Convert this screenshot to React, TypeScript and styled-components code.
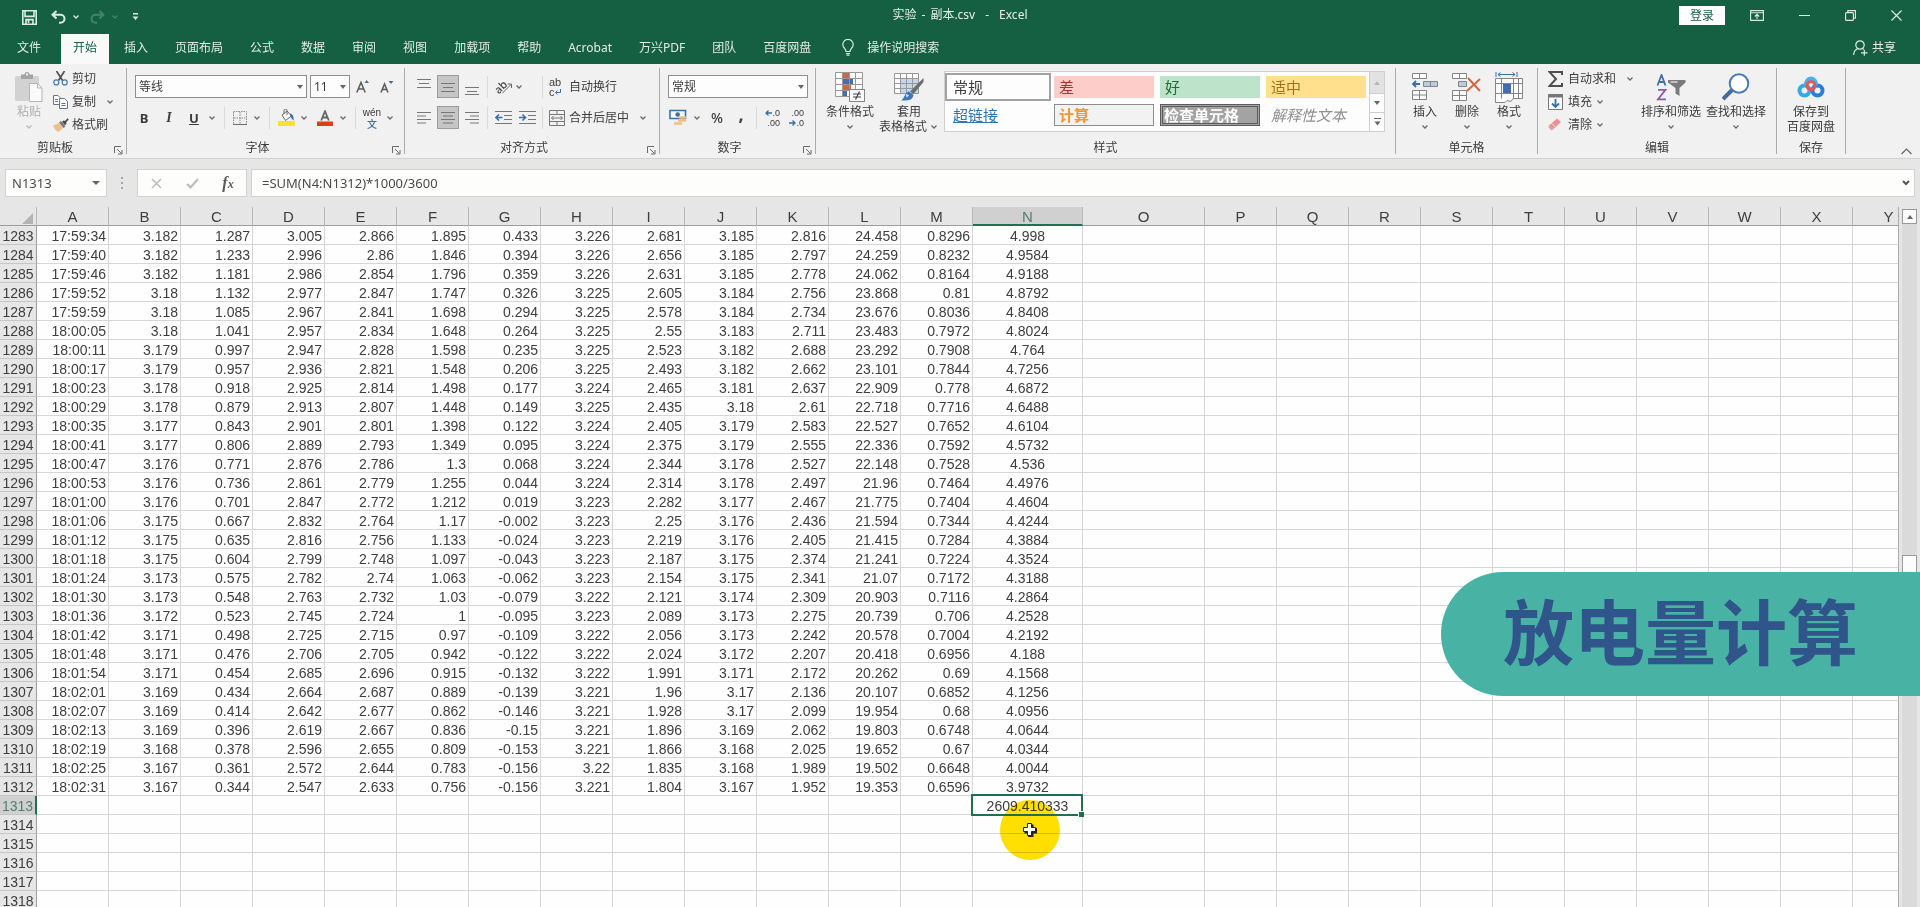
import React from "react";
import styled, { createGlobalStyle, css } from "styled-components";

/* ---------- data ---------- */

const COLUMNS: { name: string; width: number }[] = [
  ..."ABCDEFGHIJKLM".split("").map((name) => ({ name, width: 72 })),
  { name: "N", width: 110 },
  { name: "O", width: 122 },
  ..."PQRSTUVWXY".split("").map((name) => ({ name, width: 72 })),
];

const FIRST_ROW = 1283;
const SELECTED_ROW = 1313;
const LAST_ROW = 1318;

const ROWS = `
17:59:34 3.182 1.287 3.005 2.866 1.895 0.433 3.226 2.681 3.185 2.816 24.458 0.8296 4.998
17:59:40 3.182 1.233 2.996 2.86 1.846 0.394 3.226 2.656 3.185 2.797 24.259 0.8232 4.9584
17:59:46 3.182 1.181 2.986 2.854 1.796 0.359 3.226 2.631 3.185 2.778 24.062 0.8164 4.9188
17:59:52 3.18 1.132 2.977 2.847 1.747 0.326 3.225 2.605 3.184 2.756 23.868 0.81 4.8792
17:59:59 3.18 1.085 2.967 2.841 1.698 0.294 3.225 2.578 3.184 2.734 23.676 0.8036 4.8408
18:00:05 3.18 1.041 2.957 2.834 1.648 0.264 3.225 2.55 3.183 2.711 23.483 0.7972 4.8024
18:00:11 3.179 0.997 2.947 2.828 1.598 0.235 3.225 2.523 3.182 2.688 23.292 0.7908 4.764
18:00:17 3.179 0.957 2.936 2.821 1.548 0.206 3.225 2.493 3.182 2.662 23.101 0.7844 4.7256
18:00:23 3.178 0.918 2.925 2.814 1.498 0.177 3.224 2.465 3.181 2.637 22.909 0.778 4.6872
18:00:29 3.178 0.879 2.913 2.807 1.448 0.149 3.225 2.435 3.18 2.61 22.718 0.7716 4.6488
18:00:35 3.177 0.843 2.901 2.801 1.398 0.122 3.224 2.405 3.179 2.583 22.527 0.7652 4.6104
18:00:41 3.177 0.806 2.889 2.793 1.349 0.095 3.224 2.375 3.179 2.555 22.336 0.7592 4.5732
18:00:47 3.176 0.771 2.876 2.786 1.3 0.068 3.224 2.344 3.178 2.527 22.148 0.7528 4.536
18:00:53 3.176 0.736 2.861 2.779 1.255 0.044 3.224 2.314 3.178 2.497 21.96 0.7464 4.4976
18:01:00 3.176 0.701 2.847 2.772 1.212 0.019 3.223 2.282 3.177 2.467 21.775 0.7404 4.4604
18:01:06 3.175 0.667 2.832 2.764 1.17 -0.002 3.223 2.25 3.176 2.436 21.594 0.7344 4.4244
18:01:12 3.175 0.635 2.816 2.756 1.133 -0.024 3.223 2.219 3.176 2.405 21.415 0.7284 4.3884
18:01:18 3.175 0.604 2.799 2.748 1.097 -0.043 3.223 2.187 3.175 2.374 21.241 0.7224 4.3524
18:01:24 3.173 0.575 2.782 2.74 1.063 -0.062 3.223 2.154 3.175 2.341 21.07 0.7172 4.3188
18:01:30 3.173 0.548 2.763 2.732 1.03 -0.079 3.222 2.121 3.174 2.309 20.903 0.7116 4.2864
18:01:36 3.172 0.523 2.745 2.724 1 -0.095 3.223 2.089 3.173 2.275 20.739 0.706 4.2528
18:01:42 3.171 0.498 2.725 2.715 0.97 -0.109 3.222 2.056 3.173 2.242 20.578 0.7004 4.2192
18:01:48 3.171 0.476 2.706 2.705 0.942 -0.122 3.222 2.024 3.172 2.207 20.418 0.6956 4.188
18:01:54 3.171 0.454 2.685 2.696 0.915 -0.132 3.222 1.991 3.171 2.172 20.262 0.69 4.1568
18:02:01 3.169 0.434 2.664 2.687 0.889 -0.139 3.221 1.96 3.17 2.136 20.107 0.6852 4.1256
18:02:07 3.169 0.414 2.642 2.677 0.862 -0.146 3.221 1.928 3.17 2.099 19.954 0.68 4.0956
18:02:13 3.169 0.396 2.619 2.667 0.836 -0.15 3.221 1.896 3.169 2.062 19.803 0.6748 4.0644
18:02:19 3.168 0.378 2.596 2.655 0.809 -0.153 3.221 1.866 3.168 2.025 19.652 0.67 4.0344
18:02:25 3.167 0.361 2.572 2.644 0.783 -0.156 3.22 1.835 3.168 1.989 19.502 0.6648 4.0044
18:02:31 3.167 0.344 2.547 2.633 0.756 -0.156 3.221 1.804 3.167 1.952 19.353 0.6596 3.9732
`
  .trim()
  .split("\n")
  .map((line) => line.split(" "));

/* ---------- theme values ---------- */

const GREEN = "#155f43";
const ACCENT = "#1f6f50";
const UI_FONT = '"Noto Sans", "Noto Sans CJK SC", sans-serif';
const STYLE_FONT = '"Noto Sans CJK SC", "Noto Sans", sans-serif';
const CELL_FONT = '"Liberation Sans", "Noto Sans CJK SC", sans-serif';

const GlobalStyle = createGlobalStyle`
  *, *::before, *::after { box-sizing: border-box; }
  body { margin: 0; background: #e6e6e6; overflow: hidden; }
  button, input, select { font: inherit; color: inherit; margin: 0; }
  button { background: none; border: 0; padding: 0; cursor: default; }
  svg { display: block; flex: none; }
`;

/* ---------- frame ---------- */

const Window = styled.div`
  height: 100vh;
  display: flex;
  flex-direction: column;
  overflow: hidden;
  background: #e6e6e6;
  color: #3c3c3c;
  font: 12px/16px ${UI_FONT};
`;

const TitleBar = styled.header`
  display: grid;
  grid-template-columns: 1fr auto 1fr;
  align-items: center;
  height: 34px;
  padding-bottom: 4px;
  background: ${GREEN};
  color: #e6efea;
`;

const QuickAccess = styled.div`
  display: flex;
  align-items: center;
  padding: 4px 0 0 22px;
  gap: 9px;

  & > button:first-child {
    margin-right: 5px;
  }
  & > button:last-child {
    margin-left: 3px;
  }
`;

const SplitPair = styled.span<{ $dim?: boolean }>`
  display: flex;
  align-items: center;
  gap: 5px;
  opacity: ${(p) => (p.$dim ? 0.25 : 1)};
`;

const DocTitle = styled.h1`
  display: flex;
  gap: 5px;
  margin: 0;
  font-size: 12px;
  font-weight: 400;
`;

const AppDash = styled.span`
  margin: 0 5px;
`;

const WindowControls = styled.div`
  display: flex;
  align-items: center;
  justify-content: flex-end;
  padding-right: 18px;
  gap: 35px;
`;

const SignIn = styled.button`
  width: 46px;
  height: 19px;
  margin-right: -10px;
  background: #fdfefe;
  color: ${GREEN};
  line-height: 19px;
`;

const TabBar = styled.nav`
  display: flex;
  align-items: stretch;
  height: 30px;
  padding: 0 24px 0 5px;
  gap: 3px;
  background: ${GREEN};
  color: #e2ece7;
`;

const Tab = styled.button<{ $active?: boolean; $file?: boolean }>`
  padding: 0 12px 3px;
  margin-right: ${(p) => (p.$file ? 5 : 0)}px;
  background: ${(p) => (p.$active ? "#f8f9f8" : "transparent")};
  color: ${(p) => (p.$active ? GREEN : "inherit")};
  white-space: nowrap;
`;

const TellMe = styled.button`
  display: flex;
  align-items: center;
  gap: 13px;
  padding: 0 0 3px 16px;
`;

const Share = styled.button`
  display: flex;
  align-items: center;
  gap: 4px;
  margin-left: auto;
  padding-bottom: 3px;
`;

/* ---------- ribbon ---------- */

const Ribbon = styled.section`
  display: flex;
  height: 95px;
  background: #f1f1f1;
  border-bottom: 1px solid #d2d2d2;
`;

const Group = styled.div<{ $w: number }>`
  flex: none;
  display: flex;
  flex-direction: column;
  width: ${(p) => p.$w}px;
  height: 94px;
`;

const Divider = styled.span`
  flex: none;
  width: 1px;
  height: 86px;
  margin-top: 4px;
  background: #ababab;
`;

const GroupBody = styled.div<{ $left?: number; $gap?: number }>`
  flex: 1;
  display: flex;
  gap: ${(p) => p.$gap ?? 0}px;
  padding-left: ${(p) => p.$left ?? 0}px;
`;

const GroupFooter = styled.div`
  display: flex;
  align-items: center;
  height: 20px;
`;

const GroupLabel = styled.span`
  flex: 1;
  text-align: center;
`;

const Launcher = styled.button`
  display: flex;
  justify-content: flex-end;
  width: 16px;
  padding: 4px 3px 0 0;
`;

const Lines = styled.div`
  display: flex;
  flex-direction: column;
  gap: 8px;
  padding-top: 11px;
`;

const Line = styled.div<{ $gap: number }>`
  display: flex;
  align-items: center;
  height: 23px;
  gap: ${(p) => p.$gap}px;
`;

const Stack = styled.div<{ $w: number }>`
  display: flex;
  flex-direction: column;
  width: ${(p) => p.$w}px;
  padding-top: 3px;
`;

const SmallButton = styled.button<{ $iconW: number; $arrowGap?: number }>`
  display: grid;
  grid-template-columns: ${(p) => p.$iconW}px auto auto;
  justify-content: start;
  align-items: center;
  height: 23px;
  column-gap: 3px;
  white-space: nowrap;

  & > svg:last-child {
    margin-left: ${(p) => p.$arrowGap ?? 0}px;
  }
`;

const BigButton = styled.button<{ $w: number; $dim?: boolean }>`
  display: flex;
  flex-direction: column;
  align-items: center;
  flex: none;
  width: ${(p) => p.$w}px;
  padding-top: 6px;
  line-height: 15px;
  white-space: nowrap;
  color: ${(p) => (p.$dim ? "#b0b0b0" : "inherit")};
`;

const BigIcon = styled.span`
  display: flex;
  align-items: center;
  justify-content: center;
  height: 34px;
`;

const BigLine = styled.span`
  display: flex;
  align-items: center;
  justify-content: center;
  gap: 2px;
  height: 15px;
`;

const Tool = styled.button<{ $w?: number; $pressed?: boolean }>`
  flex: none;
  display: flex;
  align-items: center;
  justify-content: center;
  width: ${(p) => p.$w ?? 18}px;
  height: 23px;
  ${(p) =>
    p.$pressed &&
    css`
      background: #c5c5c5;
      border: 1px solid #9b9b9b;
    `}
`;

const Letter = styled.span<{ $kind: "bold" | "italic" | "underline" }>`
  font-family: ${(p) => (p.$kind === "italic" ? '"Liberation Serif", serif' : UI_FONT)};
  font-size: ${(p) => (p.$kind === "italic" ? 14 : 13)}px;
  font-weight: 700;
  font-style: ${(p) => (p.$kind === "italic" ? "italic" : "normal")};
  text-decoration: ${(p) => (p.$kind === "underline" ? "underline" : "none")};
`;

const Percent = styled.span`
  font-size: 14px;
  font-weight: 500;
`;

const Comma = styled.span`
  padding-bottom: 8px;
  font-size: 18px;
  font-weight: 700;
`;

const Pair = styled.span<{ $gap: number; $w?: number }>`
  flex: none;
  display: flex;
  align-items: center;
  gap: ${(p) => p.$gap}px;
  width: ${(p) => (p.$w ? `${p.$w}px` : "auto")};
`;

const ThinRule = styled.span`
  flex: none;
  width: 1px;
  height: 22px;
  background: #d9d9d9;
`;

const SelectFrame = styled.label<{ $w: number }>`
  position: relative;
  flex: none;
  width: ${(p) => p.$w}px;
  height: 23px;

  select {
    appearance: none;
    width: 100%;
    height: 100%;
    padding: 0 3px;
    border: 1px solid #8f8f8f;
    border-radius: 0;
    background: #fdfdfd;
  }

  svg {
    position: absolute;
    right: 4px;
    top: 10px;
    pointer-events: none;
  }
`;

const Gallery = styled.div`
  display: flex;
  flex: none;
  height: 61px;
  margin-top: 7px;
  border: 1px solid #d0d0d0;
  background: #fdfdfd;
`;

const GalleryGrid = styled.div`
  display: grid;
  grid-template-columns: repeat(4, 100px);
  grid-template-rows: repeat(2, 22px);
  gap: 6px;
  padding: 4px 3px;
`;

type Look = "plain" | "link" | "bad" | "good" | "neutral" | "calc" | "check" | "note";

const looks = {
  plain: css`
    outline: 2px solid #a2a2a2;
    outline-offset: 1px;
  `,
  link: css`
    color: #2f76b5;
    text-decoration: underline;
  `,
  bad: css`
    background: #fdcdca;
    color: #b0302c;
  `,
  good: css`
    background: #bee3cb;
    color: #1f6b35;
  `,
  neutral: css`
    background: #ffe08c;
    color: #a3711a;
  `,
  calc: css`
    background: #f2f2f2;
    border-color: #8c8c8c;
    color: #f0952f;
    font-weight: 700;
  `,
  check: css`
    background: #a3a3a3;
    border: 3px double #5c5c5c;
    color: #fbfbfb;
    font-weight: 700;
  `,
  note: css`
    color: #8f8f8f;
    font-style: italic;
  `,
};

const StyleCell = styled.button<{ $look: Look }>`
  padding: 0 0 1px ${(p) => (p.$look === "check" ? 1 : 4)}px;
  border: 1px solid transparent;
  text-align: left;
  font: 15px/15px ${STYLE_FONT};
  white-space: nowrap;
  ${(p) => looks[p.$look]}
`;

const GalleryScroll = styled.div`
  display: grid;
  grid-template-rows: 21px 19px 19px;
  width: 15px;

  button {
    display: grid;
    place-items: center;
    border-left: 1px solid #cfcfcf;
  }
  button + button {
    border-top: 1px solid #cfcfcf;
  }
  button:first-child {
    background: #e2e2e2;
  }
`;

const Collapse = styled.button`
  margin-left: auto;
  align-self: flex-end;
  padding: 0 8px 3px 0;
`;

/* ---------- formula bar ---------- */

const FormulaBar = styled.section`
  display: flex;
  align-items: flex-start;
  height: 48px;
  padding: 10px 5px 0;
  color: #4a4a4a;
`;

const Box = styled.div`
  display: flex;
  align-items: center;
  height: 28px;
  border: 1px solid #d2d2d2;
  background: #fdfdfc;

  input {
    flex: 1;
    min-width: 0;
    border: 0;
    padding: 0;
    background: none;
    outline: none;
    font-size: 13px;
  }
`;

const NameBox = styled(Box)`
  width: 102px;
  padding: 0 6px;
`;

const Grip = styled.span`
  display: flex;
  justify-content: center;
  align-items: center;
  width: 30px;
  height: 28px;
`;

const FormulaActions = styled(Box)`
  width: 110px;
  padding: 0 9px;
  justify-content: space-between;
  margin-right: 4px;

  button {
    width: 18px;
    display: grid;
    place-items: center;
  }
`;

const FormulaBox = styled(Box)`
  flex: 1;
  padding: 0 3px 0 10px;
`;

const Fx = styled.span`
  font: italic 700 16px/18px "Liberation Serif", serif;
  color: #5a5a5a;

  small {
    font-size: 12px;
  }
`;

/* ---------- sheet ---------- */

const Sheet = styled.main`
  position: relative;
  flex: 1;
  min-height: 0;
  display: flex;
  overflow: hidden;
`;

const Viewport = styled.div`
  flex: 1;
  min-width: 0;
  overflow: hidden;
  border-right: 1px solid #ababab;
`;

const Grid = styled.table`
  table-layout: fixed;
  width: 1925px;
  border-spacing: 0;
  font: 14px/16px ${CELL_FONT};
  color: #3e3e40;
`;

const headBase = css`
  padding: 2px 0 0;
  font-weight: 400;
  height: 19px;
  background: #e6e6e6;
  text-align: center;
`;

const ColHead = styled.th<{ $on?: boolean }>`
  ${headBase}
  font-size: 15px;
  border-right: 1px solid #b9b9b9;
  border-bottom: 1px solid #9d9d9d;
  ${(p) =>
    p.$on &&
    css`
      background: #d0d0d0;
      color: #4d8071;
      border-bottom: 2px solid ${ACCENT};
      line-height: 15px;
    `}
`;

const Corner = styled.th`
  ${headBase}
  border-right: 1px solid #b9b9b9;
  border-bottom: 1px solid #9d9d9d;

  svg {
    margin: 2px 3px 0 auto;
  }
`;

const RowHead = styled.th<{ $on?: boolean }>`
  ${headBase}
  border-right: 1px solid #9d9d9d;
  border-bottom: 1px solid #c6c6c6;
  ${(p) =>
    p.$on &&
    css`
      background: #d0d0d0;
      color: #4d8071;
      border-right: 2px solid ${ACCENT};
    `}
`;

const Cell = styled.td<{ $center?: boolean }>`
  position: relative;
  height: 19px;
  padding: 2px ${(p) => (p.$center ? 0 : 2)}px 0 0;
  border-right: 1px solid #d6d6d6;
  border-bottom: 1px solid #d6d6d6;
  background: #fefefe;
  text-align: ${(p) => (p.$center ? "center" : "right")};
  white-space: nowrap;
`;

const SelectionFrame = styled.span`
  position: absolute;
  z-index: 1;
  inset: -2px -1px -2px -2px;
  border: 2px solid ${ACCENT};

  &::after {
    content: "";
    position: absolute;
    right: -3px;
    bottom: -3px;
    width: 6px;
    height: 6px;
    background: ${ACCENT};
    border: 1px solid #fefefe;
    border-right: 0;
    border-bottom: 0;
  }
`;

const Pointer = styled.div`
  position: absolute;
  left: 1000px;
  top: 593px;
  width: 60px;
  height: 60px;
  display: grid;
  place-items: center;
  border-radius: 50%;
  background: #ffe000;
  mix-blend-mode: multiply;
`;

const PointerCross = styled(Pointer)`
  background: none;
  mix-blend-mode: normal;
`;

const ScrollBar = styled.div`
  width: 21px;
  padding: 2px 3px 0;
  display: flex;
  flex-direction: column;
`;

const ScrollButton = styled.button`
  display: grid;
  place-items: center;
  height: 15px;
  border: 1px solid #9a9a9a;
  background: #fbfbfb;
`;

const ScrollTrack = styled.div`
  flex: 1;
  padding-top: 331px;
  background: #dadada;
`;

const ScrollThumb = styled.div`
  height: 60px;
  border: 1px solid #9a9a9a;
  background: #fdfdfd;
`;

const Banner = styled.aside`
  position: absolute;
  right: 0;
  top: 365px;
  padding: 0 62px 12px;
  border-radius: 62px 0 0 62px;
  background: #48b2a5;
  color: #2f558b;
  font: 700 71px/112px "Noto Sans CJK SC", sans-serif;
  white-space: nowrap;
`;

/* ---------- glyphs ---------- */

const Chevron = ({ color = "#6a6a6a" }: { color?: string }) => (
  <svg width="10" height="6" viewBox="0 0 10 6" fill="none" stroke={color} strokeWidth="1.3">
    <path d="M2.5 1.5 5 4l2.5-2.5" />
  </svg>
);

const Caret = ({ w = 6, color = "#666", up = false }: { w?: number; color?: string; up?: boolean }) => (
  <svg width={w} height="4" viewBox="0 0 6 4" preserveAspectRatio="none" fill={color}>
    <path d={up ? "M0 4h6L3 0z" : "M0 0h6L3 4z"} />
  </svg>
);

const LauncherIcon = () => (
  <svg width="9" height="9" viewBox="0 0 9 9" fill="none" stroke="#6a6a6a">
    <path d="M.5 7V.5H7M3 3l4.5 4.5M8 4v4H4" />
  </svg>
);

const SaveIcon = () => (
  <svg width="15" height="15" viewBox="0 0 15 15" fill="none" stroke="#dcebe4" strokeWidth="1.6">
    <path d="M.8.8h13.4v13.4H.8zM3 1v5.4h9V1M4 14V9.6h7V14M6.5 10v3" />
  </svg>
);

const UndoIcon = () => (
  <svg width="15" height="14" viewBox="0 0 15 14" fill="none" stroke="#dcebe4" strokeWidth="2">
    <path d="M5.5 1 1.5 4.8l4 3.7M2 4.8h7.5a4 4 0 0 1 0 8H8" />
  </svg>
);

const RedoIcon = () => (
  <svg width="15" height="14" viewBox="0 0 15 14" fill="none" stroke="#dcebe4" strokeWidth="2">
    <path d="M9.5 1l4 3.8-4 3.7M13 4.8H5.5a4 4 0 0 0 0 8H7" />
  </svg>
);

const CustomizeIcon = () => (
  <svg width="7" height="8" viewBox="0 0 7 8" fill="#dcebe4">
    <path d="M1 0h5v1.4H1zM.5 3.5h6L3.5 7z" />
  </svg>
);

const RibbonModeIcon = () => (
  <svg width="14" height="11" viewBox="0 0 14 11" fill="none" stroke="#dcebe4" strokeWidth="1.1">
    <path d="M.6.6h12.8v9.8H.6zM.6 2.8h12.8M7 9V4.5M4.8 6.5 7 4.3l2.2 2.2" />
  </svg>
);

const MinimizeIcon = () => (
  <svg width="11" height="11" viewBox="0 0 11 11" stroke="#dcebe4">
    <path d="M0 5.5h11" />
  </svg>
);

const RestoreIcon = () => (
  <svg width="11" height="11" viewBox="0 0 11 11" fill="none" stroke="#dcebe4" strokeWidth="1.1">
    <rect x=".6" y="2.6" width="7.8" height="7.8" rx="1" />
    <path d="M2.8 2.5V.6h7.6v7.6H8.5" />
  </svg>
);

const CloseIcon = () => (
  <svg width="11" height="11" viewBox="0 0 11 11" stroke="#dcebe4" strokeWidth="1.2">
    <path d="m.5.5 10 10M10.5.5l-10 10" />
  </svg>
);

const BulbIcon = () => (
  <svg width="12" height="17" viewBox="0 0 12 17" fill="none" stroke="#dcebe4" strokeWidth="1.2">
    <path d="M4 12.5c0-2.6-3.2-3.6-3.2-6.900a5.200 5.200 0 0 1 10.400 0c0 3.300-3.200 4.300-3.200 6.900zM4 14.500h4M4.500 16.200h3" />
  </svg>
);

const ShareIcon = () => (
  <svg width="15" height="16" viewBox="0 0 15 16" fill="none" stroke="#dcebe4" strokeWidth="1.2">
    <circle cx="7" cy="5" r="4.2" />
    <path d="M.6 15c.2-3.5 1.8-5.3 4-6.2M9.5 8.5l1.2.9M8 12.8h6.5M11.3 9.800v6" />
  </svg>
);

const PasteIcon = () => (
  <svg width="28" height="31" viewBox="0 0 28 31">
    <rect x="0" y="4" width="24" height="25" rx="1.5" fill="#d2d2d2" />
    <path d="M6 2.5h3.5a2.5 2.5 0 0 1 5 0H18V7H6z" fill="#a4a4a4" />
    <rect x="11" y="1.5" width="2" height="2" fill="#f1f1f1" />
    <path d="M14.5 11.5h8l4.5 4.5v13.5H14.5z" fill="#fafafa" stroke="#b5b5b5" />
    <path d="M22.5 11.5V16H27" fill="none" stroke="#b5b5b5" />
  </svg>
);

const CutIcon = () => (
  <svg width="15" height="15" viewBox="0 0 15 15" fill="none">
    <path d="M3.5 0 9.5 9.5M11.5 0 5.5 9.5" stroke="#505050" strokeWidth="1.7" />
    <circle cx="3.3" cy="11.4" r="2.5" stroke="#4479b4" strokeWidth="1.2" />
    <circle cx="11.7" cy="11.4" r="2.5" stroke="#4479b4" strokeWidth="1.2" />
  </svg>
);

const CopyIcon = () => (
  <svg width="15" height="14" viewBox="0 0 15 14" fill="#fafafa" stroke="#6d7480">
    <path d="M.5.5H5l2 2v7H.5zM2 4.5h3M2 6.5h3" />
    <path d="M6.5 3.5h5l3 3v7h-8z" />
    <path d="M8.5 8.5h4M8.5 10.5h4" stroke="#4479b4" />
  </svg>
);

const BrushIcon = () => (
  <svg width="16" height="14" viewBox="0 0 16 14">
    <path d="M0 7.5 6 5l4 5-4.5 4c-2-.5-4-3-5.5-6.5z" fill="#ecc08a" />
    <path d="m6 4.5 2-1.5 4.5 5.5L10.5 10z" fill="#777" />
    <path d="m9 3.8 1.5-1.3L12 3l2.5-2.8 1.3 1.3-2.6 2.8.3 1.5-1.5 1.5z" fill="#4a4a4a" />
  </svg>
);

const GrowIcon = ({ small = false }: { small?: boolean }) => (
  <svg width="14" height="15" viewBox="0 0 14 15" fill="none" stroke="#5a5a5a">
    {small ? (
      <>
        <path d="M1 13.5 4.5 5l3.5 8.5M2.5 10.5h4" strokeWidth="1.5" />
        <path d="M8.5 2h5l-2.5 3z" fill="#4d6c8e" stroke="none" />
      </>
    ) : (
      <>
        <path d="M.8 13.5 5 3.5l4.2 10M2.5 10h5" strokeWidth="1.5" />
        <path d="M8.5 4h4.5L10.7 1z" fill="#4d6c8e" stroke="none" />
      </>
    )}
  </svg>
);

const BorderIcon = () => (
  <svg width="14" height="14" viewBox="0 0 14 14" fill="none" stroke="#8a8a8a">
    <path d="M.5.5h13v13H.5zM7 1v12M1 7h12" strokeDasharray="1.5 1" />
    <path d="M0 13.5h14" stroke="#6d6d6d" />
  </svg>
);

const BucketIcon = () => (
  <svg width="17" height="17" viewBox="0 0 17 17">
    <path d="m4 6 5-4 4.5 5-6 4.5z" fill="#f6f6f6" stroke="#6b6b6b" />
    <path d="M6 5V1.5a1.5 1.5 0 0 1 3 0V6" fill="none" stroke="#6b6b6b" />
    <path d="M12 4.500c3 .5 4 3 3.500 7-1-1-2.500-2.500-3-4z" fill="#3f6fa8" />
    <rect x="0" y="12" width="17" height="5" fill="#fbe12d" />
  </svg>
);

const FontColorIcon = () => (
  <svg width="16" height="16" viewBox="0 0 16 16">
    <path d="M4.2 10.5 8 1.2l3.8 9.3M5.5 7.5h5" fill="none" stroke="#666" strokeWidth="1.8" />
    <rect y="11.5" width="16" height="4.5" fill="#d9401c" />
  </svg>
);

const Phonetic = styled.span`
  display: flex;
  flex-direction: column;
  align-items: center;
  font: 10px/11px "Liberation Sans", sans-serif;

  b {
    font: 500 10px/11px "Noto Sans CJK SC", sans-serif;
    color: #3a6ea8;
  }
`;

const VLines = ({ at }: { at: "top" | "middle" | "bottom" }) => {
  const y = { top: 1, middle: 5, bottom: 9 }[at];
  return (
    <svg width="14" height="18" viewBox="0 0 14 18" stroke="#777">
      <path d={`M0 ${y + 0.5}h14M2 ${y + 4.5}h10M0 ${y + 8.5 - (at === "bottom" ? 1 : 0)}h14`} />
    </svg>
  );
};

const HLines = ({ at }: { at: "left" | "center" | "right" }) => {
  const x = { left: 0, center: 2, right: 5 }[at];
  const len = at === "center" ? 10 : 9;
  return (
    <svg width="14" height="12" viewBox="0 0 14 12" stroke="#777">
      <path d={`M0 .5h14M${x} 4h${len}M0 7.5h14M${x} 11h${len}`} />
    </svg>
  );
};

const Slanted = styled.span`
  display: block;
  font-size: 11px;
  font-weight: 500;
  line-height: 10px;
  transform: rotate(-45deg);
`;

const SlantArrow = () => (
  <svg width="10" height="12" viewBox="0 0 10 12" fill="none" stroke="#666">
    <path d="M0 11.5 9 2.5M5.5 2H9.500V6" />
  </svg>
);

const SlantBox = styled.span`
  display: flex;
  align-items: center;

  svg {
    margin: 3px 0 0 -6px;
  }
`;

const IndentIcon = ({ out = false }: { out?: boolean }) => (
  <svg width="17" height="14" viewBox="0 0 17 14" fill="none" stroke="#777">
    <path d="M0 .5h17M9 4.5h8M9 8.5h8M0 12.5h17" />
    <path d={out ? "M7.5 6.5H1.5M4 3.5l-3 3 3 3" : "M0 6.5h6M3.5 3.5l3 3-3 3"} stroke="#3a6ea8" strokeWidth="1.6" />
  </svg>
);

const WrapGlyph = styled.span`
  display: flex;
  flex-direction: column;
  width: 16px;
  font: 11px/10px "Liberation Sans", sans-serif;

  span {
    display: flex;
    align-items: center;
    height: 10px;
  }
`;

const ReturnIcon = () => (
  <svg width="6" height="6" viewBox="0 0 6 6" fill="none" stroke="#3a6ea8">
    <path d="M5.5 0v3.5H1M2.5 1.500l-2 2 2 2" />
  </svg>
);

const MergeIcon = () => (
  <svg width="16" height="16" viewBox="0 0 16 16" fill="none" stroke="#777">
    <path d="M.5.5h15v15H.5zM.5 4.5h15M.5 11.5h15M8 .5v4M8 11.5v4M2.5 8h11M4.5 6l-2 2 2 2M11.5 6l2 2-2 2" />
  </svg>
);

const CurrencyIcon = () => (
  <svg width="18" height="17" viewBox="0 0 18 17">
    <path d="M1 1.5h15.5v8H1z" fill="#f4f8fc" stroke="#3d6fa5" strokeWidth="1.6" />
    <circle cx="8.7" cy="5.5" r="2.3" fill="#3d6fa5" />
    <path d="M10 8.5h7M9 11.500h8M5 14.500h8" stroke="#efbf84" strokeWidth="2.4" />
  </svg>
);

const Decimals = styled.span`
  display: flex;
  flex-direction: column;
  width: 16px;
  font: 9px/10px "Liberation Sans", sans-serif;

  span {
    display: flex;
    align-items: center;
    justify-content: flex-end;
  }
`;

const TinyArrow = ({ right = false }: { right?: boolean }) => (
  <svg width="7" height="6" viewBox="0 0 7 6" fill="none" stroke="#3a6ea8" strokeWidth="1.3">
    <path d={right ? "M0 3h6M3.5.5 6 3 3.5 5.5" : "M7 3H1M3.5.5 1 3l2.5 2.5"} />
  </svg>
);

const ConditionalIcon = () => (
  <svg width="30" height="31" viewBox="0 0 30 31">
    <path d="M.5.5h27v24H.5z" fill="#fcfcfc" />
    <rect x="7" y="1" width="7" height="6" fill="#c5694b" />
    <rect x="7" y="7" width="11" height="5" fill="#476fa6" />
    <rect x="7" y="13" width="9" height="5" fill="#c5694b" />
    <rect x="7" y="19" width="5" height="5" fill="#476fa6" />
    <path
      d="M.5.5h27v24H.5zM.5 6.5h27M.5 12.5h27M.5 18.5h27M7.5.5v24M14.5.5v24M20.5.5v24"
      fill="none"
      stroke="#989898"
    />
    <rect x="14.5" y="17.5" width="15" height="12" fill="#fbfbfb" stroke="#868686" />
    <path d="M18 22h8M18 25h8M24.5 19.5l-4 8" stroke="#444" strokeWidth="1.2" />
  </svg>
);

const TableFormatIcon = () => (
  <svg width="30" height="29" viewBox="0 0 30 29">
    <path d="M.5.5h24v20H.5z" fill="#fcfcfc" />
    <path d="M7 6h17v14H7z" fill="#c7d6ea" />
    <path
      d="M.5.5h24v20H.5zM.5 5.5h24M.5 10.5h24M.5 15.5h24M6.5.5v20M12.5.5v20M18.5.5v20"
      fill="none"
      stroke="#989898"
    />
    <path d="M29.5 5v4l-10 12-3.5-2.5z" fill="#6d6d6d" />
    <path d="M15 18.5 19.5 22c-1 5-5 6-12.5 5.5 3.5-1.5 3.5-8 8-9z" fill="#3d78b8" />
    <path d="m12 21 3 1.5-2.5 2z" fill="#eef4fa" />
  </svg>
);

const InsertCellsIcon = () => (
  <svg width="28" height="28" viewBox="0 0 28 28" fill="#fbfbfb" stroke="#858585">
    <path d="M1.5.5h14v5h-14zM8.5.5v5M1.5 17.5h14v9h-14zM1.5 22h14M8.5 17.5v9" />
    <path d="M12.5 8.5h14v5h-14zM19.5 8.5v5" fill="#bccbdd" />
    <path d="M9 11H2.5M5 8l-3 3 3 3" fill="none" stroke="#3a6ea8" strokeWidth="1.8" />
  </svg>
);

const DeleteCellsIcon = () => (
  <svg width="30" height="28" viewBox="0 0 30 28" fill="#fbfbfb" stroke="#858585">
    <path d="M.5.5h14v5H.5zM7.5.5v5M.5 17.5h14v10H.5zM.5 22.5h14M7.5 17.5v10" />
    <path d="M6.5 8.5h8v5h-8z" fill="#bccbdd" />
    <path d="m16 5 12 13M28 6 15 18" stroke="#d3683f" strokeWidth="2" />
  </svg>
);

const FormatCellsIcon = () => (
  <svg width="28" height="31" viewBox="0 0 28 31" fill="#fbfbfb" stroke="#858585">
    <path d="M.5 6.5h27v20H18l-2 3-4-1-2 2H.5z" />
    <path d="M.5 11.5h27M.5 21.5h27M6.5 6.5v20M18.5 6.5v20M23.5 6.5v20" fill="none" />
    <rect x="8" y="12" width="8" height="9" fill="#3f70ad" stroke="none" />
    <path d="M1 0v5M22 0v5M3 2.5h17M5.5.5l-2.5 2 2.5 2M17.5.5l2.5 2-2.5 2" fill="none" stroke="#3a6ea8" />
  </svg>
);

const SumIcon = () => (
  <svg width="15" height="16" viewBox="0 0 15 16" fill="none" stroke="#4f4f4f" strokeWidth="2">
    <path d="M14 4V1H1.5l6.5 7-6.5 7H14v-3" />
  </svg>
);

const FillIcon = () => (
  <svg width="15" height="16" viewBox="0 0 15 16" fill="none">
    <path d="M.5.5h14v15H.5z" fill="#fbfbfb" stroke="#777" />
    <path d="M0 2h15" stroke="#777" strokeWidth="3" />
    <path d="M7.5 5v8M4 9.5 7.5 13 11 9.5" stroke="#3a6ea8" strokeWidth="1.8" />
  </svg>
);

const EraserIcon = () => (
  <svg width="14" height="13" viewBox="0 0 14 13">
    <path d="M1 7.5 9 .5l4 3.5-8 7.5z" fill="#e79393" />
    <path d="m1 7.5 4 4-1.5 1-3-3z" fill="#d9a0a0" />
    <path d="m3.5 5.3 4 4" stroke="#f6e2e2" />
  </svg>
);

const SortFilterIcon = () => (
  <svg width="30" height="27" viewBox="0 0 30 27" fill="none">
    <path d="M1.5 11.5 5.5 1l4 10.5M3 8h5" stroke="#3f6fa8" strokeWidth="1.8" />
    <path d="M2 15.8h7.5l-7.5 9.5h8" stroke="#8e5aa6" strokeWidth="1.8" />
    <path d="M12 6h17.5v2.5L23.5 14v8l-4-2.5V14L12 8.5z" fill="#7a7a7a" />
    <path d="M14.5 8h7" stroke="#f1f1f1" strokeWidth="1.2" />
  </svg>
);

const FindIcon = () => (
  <svg width="28" height="28" viewBox="0 0 28 28" fill="none">
    <path d="m10 17-9 9" stroke="#44699f" strokeWidth="4" />
    <circle cx="17" cy="10.5" r="9.3" fill="#fdfdfd" stroke="#4a7ab4" strokeWidth="2" />
  </svg>
);

const CloudIcon = () => (
  <svg width="28" height="22" viewBox="0 0 28 22" fill="none" strokeWidth="4">
    <circle cx="7.5" cy="14.5" r="5" stroke="#36a9e8" />
    <circle cx="20.5" cy="14.5" r="5" stroke="#2b7fdc" />
    <path d="M9.5 9a4.8 4.8 0 1 1 9 0" stroke="#49b4ea" />
    <circle cx="14" cy="9.5" r="4" stroke="#e4575a" strokeWidth="3" />
  </svg>
);

const CrossIcon = () => (
  <svg width="16" height="16" viewBox="0 0 16 16">
    <path d="M6.500 2.500h5V6H15v5.500h-3.500V15H6v-3.500H2.500V6h4z" fill="#222" />
    <path d="M5.5 1.5h4v4h4v4h-4v4h-4v-4h-4v-4h4z" fill="#fff" stroke="#222" />
  </svg>
);

/* ---------- parts ---------- */

const TABS = ["文件", "开始", "插入", "页面布局", "公式", "数据", "审阅", "视图", "加载项", "帮助", "Acrobat", "万兴PDF", "团队", "百度网盘"];

const STYLES: [string, Look][] = [
  ["常规", "plain"],
  ["差", "bad"],
  ["好", "good"],
  ["适中", "neutral"],
  ["超链接", "link"],
  ["计算", "calc"],
  ["检查单元格", "check"],
  ["解释性文本", "note"],
];

const RibbonGroup = (props: {
  label: string;
  width: number;
  left?: number;
  gap?: number;
  launcher?: boolean;
  children: React.ReactNode;
}) => (
  <>
    <Group $w={props.width}>
      <GroupBody $left={props.left} $gap={props.gap}>
        {props.children}
      </GroupBody>
      <GroupFooter>
        <GroupLabel>{props.label}</GroupLabel>
        {props.launcher && (
          <Launcher aria-label={`${props.label}设置`}>
            <LauncherIcon />
          </Launcher>
        )}
      </GroupFooter>
    </Group>
    <Divider />
  </>
);

const Dropdown = ({ label, value, width }: { label: string; value: string; width: number }) => (
  <SelectFrame $w={width}>
    <select aria-label={label} defaultValue={value}>
      <option>{value}</option>
    </select>
    <Caret />
  </SelectFrame>
);

const Big = (props: { icon: React.ReactNode; width: number; text: string; second?: React.ReactNode; dim?: boolean }) => (
  <BigButton $w={props.width} $dim={props.dim}>
    <BigIcon>{props.icon}</BigIcon>
    <BigLine>{props.text}</BigLine>
    <BigLine>{props.second ?? <Chevron color={props.dim ? "#bbb" : undefined} />}</BigLine>
  </BigButton>
);

const ToolWithMenu = ({ label, width, children }: { label: string; width?: number; children: React.ReactNode }) => (
  <Pair $gap={4}>
    <Tool $w={width} aria-label={label}>
      {children}
    </Tool>
    <Chevron />
  </Pair>
);

const HomeRibbon = () => (
  <Ribbon aria-label="开始">
    <RibbonGroup label="剪贴板" width={126} left={14} gap={9} launcher>
      <Big icon={<PasteIcon />} width={30} text="粘贴" dim />
      <Stack $w={72}>
        <SmallButton $iconW={16}>
          <CutIcon />
          剪切
        </SmallButton>
        <SmallButton $iconW={16} $arrowGap={6}>
          <CopyIcon />
          <span>复制</span>
          <Chevron />
        </SmallButton>
        <SmallButton $iconW={16}>
          <BrushIcon />
          格式刷
        </SmallButton>
      </Stack>
    </RibbonGroup>

    <RibbonGroup label="字体" width={277} left={8} launcher>
      <Lines>
        <Line $gap={3}>
          <Dropdown label="字体" value="等线" width={172} />
          <Dropdown label="字号" value="11" width={40} />
          <Tool $w={20} aria-label="增大字号">
            <GrowIcon />
          </Tool>
          <Tool $w={22} aria-label="减小字号">
            <GrowIcon small />
          </Tool>
        </Line>
        <Line $gap={7}>
          <Tool aria-label="加粗">
            <Letter $kind="bold">B</Letter>
          </Tool>
          <Tool aria-label="倾斜">
            <Letter $kind="italic">I</Letter>
          </Tool>
          <ToolWithMenu label="下划线">
            <Letter $kind="underline">U</Letter>
          </ToolWithMenu>
          <ThinRule />
          <ToolWithMenu label="边框" width={16}>
            <BorderIcon />
          </ToolWithMenu>
          <ThinRule />
          <ToolWithMenu label="填充颜色">
            <BucketIcon />
          </ToolWithMenu>
          <ToolWithMenu label="字体颜色">
            <FontColorIcon />
          </ToolWithMenu>
          <ThinRule />
          <ToolWithMenu label="拼音">
            <Phonetic>
              wén<b>文</b>
            </Phonetic>
          </ToolWithMenu>
        </Line>
      </Lines>
    </RibbonGroup>

    <RibbonGroup label="对齐方式" width={254} left={10} launcher>
      <Lines>
        <Line $gap={6}>
          <Pair $gap={4}>
            <Tool aria-label="顶端对齐">
              <VLines at="top" />
            </Tool>
            <Tool $w={22} $pressed aria-label="垂直居中">
              <VLines at="middle" />
            </Tool>
            <Tool aria-label="底端对齐">
              <VLines at="bottom" />
            </Tool>
          </Pair>
          <ThinRule />
          <Pair $gap={2} $w={42}>
            <Tool aria-label="方向">
              <SlantBox>
                <Slanted>ab</Slanted>
                <SlantArrow />
              </SlantBox>
            </Tool>
            <Chevron />
          </Pair>
          <ThinRule />
          <SmallButton $iconW={17}>
            <WrapGlyph>
              <span>ab</span>
              <span>
                c<ReturnIcon />
              </span>
            </WrapGlyph>
            <span>自动换行</span>
          </SmallButton>
        </Line>
        <Line $gap={6}>
          <Pair $gap={4}>
            <Tool aria-label="左对齐">
              <HLines at="left" />
            </Tool>
            <Tool $w={22} $pressed aria-label="居中">
              <HLines at="center" />
            </Tool>
            <Tool aria-label="右对齐">
              <HLines at="right" />
            </Tool>
          </Pair>
          <ThinRule />
          <Pair $gap={6} $w={42}>
            <Tool aria-label="减少缩进量">
              <IndentIcon out />
            </Tool>
            <Tool aria-label="增加缩进量">
              <IndentIcon />
            </Tool>
          </Pair>
          <ThinRule />
          <SmallButton $iconW={17} $arrowGap={6}>
            <MergeIcon />
            <span>合并后居中</span>
            <Chevron />
          </SmallButton>
        </Line>
      </Lines>
    </RibbonGroup>

    <RibbonGroup label="数字" width={155} left={8} launcher>
      <Lines>
        <Line $gap={0}>
          <Dropdown label="数字格式" value="常规" width={140} />
        </Line>
        <Line $gap={6}>
          <ToolWithMenu label="会计数字格式" width={20}>
            <CurrencyIcon />
          </ToolWithMenu>
          <Tool aria-label="百分比">
            <Percent>%</Percent>
          </Tool>
          <Tool aria-label="千位分隔">
            <Comma>,</Comma>
          </Tool>
          <ThinRule />
          <Tool aria-label="增加小数位数">
            <Decimals>
              <span>
                <TinyArrow />
                .0
              </span>
              <span>.00</span>
            </Decimals>
          </Tool>
          <Tool aria-label="减少小数位数">
            <Decimals>
              <span>.00</span>
              <span>
                <TinyArrow right />
                .0
              </span>
            </Decimals>
          </Tool>
        </Line>
      </Lines>
    </RibbonGroup>

    <RibbonGroup label="样式" width={579} left={10} gap={5}>
      <Big icon={<ConditionalIcon />} width={48} text="条件格式" />
      <Big
        icon={<TableFormatIcon />}
        width={60}
        text="套用"
        second={
          <>
            表格格式
            <Chevron />
          </>
        }
      />
      <Gallery>
        <GalleryGrid>
          {STYLES.map(([text, look]) => (
            <StyleCell key={text} $look={look}>
              {text}
            </StyleCell>
          ))}
        </GalleryGrid>
        <GalleryScroll>
          <button aria-label="上一行">
            <Caret color="#b8b8b8" up />
          </button>
          <button aria-label="下一行">
            <Caret />
          </button>
          <button aria-label="其他">
            <svg width="7" height="8" viewBox="0 0 7 8" fill="#666">
              <path d="M0 0h7v1H0zM.5 3.5h6l-3 4z" />
            </svg>
          </button>
        </GalleryScroll>
      </Gallery>
    </RibbonGroup>

    <RibbonGroup label="单元格" width={141} left={8}>
      <Big icon={<InsertCellsIcon />} width={42} text="插入" />
      <Big icon={<DeleteCellsIcon />} width={42} text="删除" />
      <Big icon={<FormatCellsIcon />} width={42} text="格式" />
    </RibbonGroup>

    <RibbonGroup label="编辑" width={238} left={10} gap={5}>
      <Stack $w={88}>
        <SmallButton $iconW={17} $arrowGap={6}>
          <SumIcon />
          <span>自动求和</span>
          <Chevron />
        </SmallButton>
        <SmallButton $iconW={17}>
          <FillIcon />
          <span>填充</span>
          <Chevron />
        </SmallButton>
        <SmallButton $iconW={17}>
          <EraserIcon />
          <span>清除</span>
          <Chevron />
        </SmallButton>
      </Stack>
      <Big icon={<SortFilterIcon />} width={60} text="排序和筛选" />
      <Big icon={<FindIcon />} width={60} text="查找和选择" />
    </RibbonGroup>

    <RibbonGroup label="保存" width={68}>
      <Big icon={<CloudIcon />} width={68} text="保存到" second="百度网盘" />
    </RibbonGroup>

    <Collapse aria-label="折叠功能区">
      <svg width="11" height="7" viewBox="0 0 11 7" fill="none" stroke="#666" strokeWidth="1.2">
        <path d="m.5 6 5-5 5 5" />
      </svg>
    </Collapse>
  </Ribbon>
);

const SheetRow = ({ number }: { number: number }) => {
  const values = ROWS[number - FIRST_ROW] ?? [];
  const selected = number === SELECTED_ROW;
  return (
    <tr>
      <RowHead scope="row" $on={selected}>
        {number}
      </RowHead>
      {COLUMNS.map(({ name }, i) => (
        <Cell key={name} $center={name === "N"}>
          {selected && name === "N" ? (
            <>
              2609.410333
              <SelectionFrame />
            </>
          ) : (
            values[i]
          )}
        </Cell>
      ))}
    </tr>
  );
};

const rowNumbers = Array.from({ length: LAST_ROW - FIRST_ROW + 1 }, (_, i) => FIRST_ROW + i);

export default function App() {
  return (
    <Window>
      <GlobalStyle />
      <TitleBar>
        <QuickAccess>
          <button aria-label="保存">
            <SaveIcon />
          </button>
          <SplitPair>
            <button aria-label="撤消">
              <UndoIcon />
            </button>
            <Chevron color="#dcebe4" />
          </SplitPair>
          <SplitPair $dim>
            <button aria-label="恢复">
              <RedoIcon />
            </button>
            <Chevron color="#dcebe4" />
          </SplitPair>
          <button aria-label="自定义快速访问工具栏">
            <CustomizeIcon />
          </button>
        </QuickAccess>
        <DocTitle>
          <span>实验</span>
          <span>-</span>
          <span>副本.csv</span>
          <AppDash>-</AppDash>
          <span>Excel</span>
        </DocTitle>
        <WindowControls>
          <SignIn>登录</SignIn>
          <button aria-label="功能区显示选项">
            <RibbonModeIcon />
          </button>
          <button aria-label="最小化">
            <MinimizeIcon />
          </button>
          <button aria-label="还原">
            <RestoreIcon />
          </button>
          <button aria-label="关闭">
            <CloseIcon />
          </button>
        </WindowControls>
      </TitleBar>

      <TabBar>
        {TABS.map((name) => (
          <Tab key={name} $active={name === "开始"} $file={name === "文件"}>
            {name}
          </Tab>
        ))}
        <TellMe>
          <BulbIcon />
          操作说明搜索
        </TellMe>
        <Share>
          <ShareIcon />
          共享
        </Share>
      </TabBar>

      <HomeRibbon />

      <FormulaBar>
        <NameBox>
          <input aria-label="名称框" defaultValue="N1313" />
          <Caret w={8} />
        </NameBox>
        <Grip>
          <svg width="2" height="12" viewBox="0 0 2 12" fill="#a5a5a5">
            <path d="M0 0h2v2H0zM0 5h2v2H0zM0 10h2v2H0z" />
          </svg>
        </Grip>
        <FormulaActions>
          <button aria-label="取消">
            <svg width="11" height="11" viewBox="0 0 11 11" stroke="#bcbcbc" strokeWidth="1.5">
              <path d="m1 1 9 9M10 1l-9 9" />
            </svg>
          </button>
          <button aria-label="输入">
            <svg width="13" height="11" viewBox="0 0 13 11" fill="none" stroke="#bcbcbc" strokeWidth="2">
              <path d="m1 6 3.5 3.5L12 1" />
            </svg>
          </button>
          <button aria-label="插入函数">
            <Fx>
              f<small>x</small>
            </Fx>
          </button>
        </FormulaActions>
        <FormulaBox>
          <input aria-label="编辑栏" defaultValue="=SUM(N4:N1312)*1000/3600" />
          <svg width="10" height="6" viewBox="0 0 10 6" fill="none" stroke="#555" strokeWidth="2">
            <path d="m2 1 3 3 3-3" />
          </svg>
        </FormulaBox>
      </FormulaBar>

      <Sheet>
        <Viewport>
          <Grid>
            <colgroup>
              <col width={37} />
              {COLUMNS.map(({ name, width }) => (
                <col key={name} width={width} />
              ))}
            </colgroup>
            <thead>
              <tr>
                <Corner aria-label="全选">
                  <svg width="11" height="11" viewBox="0 0 11 11" fill="#b4b4b4">
                    <path d="M11 0v11H0z" />
                  </svg>
                </Corner>
                {COLUMNS.map(({ name }) => (
                  <ColHead key={name} scope="col" $on={name === "N"}>
                    {name}
                  </ColHead>
                ))}
              </tr>
            </thead>
            <tbody>
              {rowNumbers.map((n) => (
                <SheetRow key={n} number={n} />
              ))}
            </tbody>
          </Grid>
        </Viewport>
        <ScrollBar>
          <ScrollButton aria-label="向上滚动">
            <Caret up />
          </ScrollButton>
          <ScrollTrack>
            <ScrollThumb />
          </ScrollTrack>
        </ScrollBar>
        <Pointer />
        <PointerCross>
          <CrossIcon />
        </PointerCross>
        <Banner>放电量计算</Banner>
      </Sheet>
    </Window>
  );
}
